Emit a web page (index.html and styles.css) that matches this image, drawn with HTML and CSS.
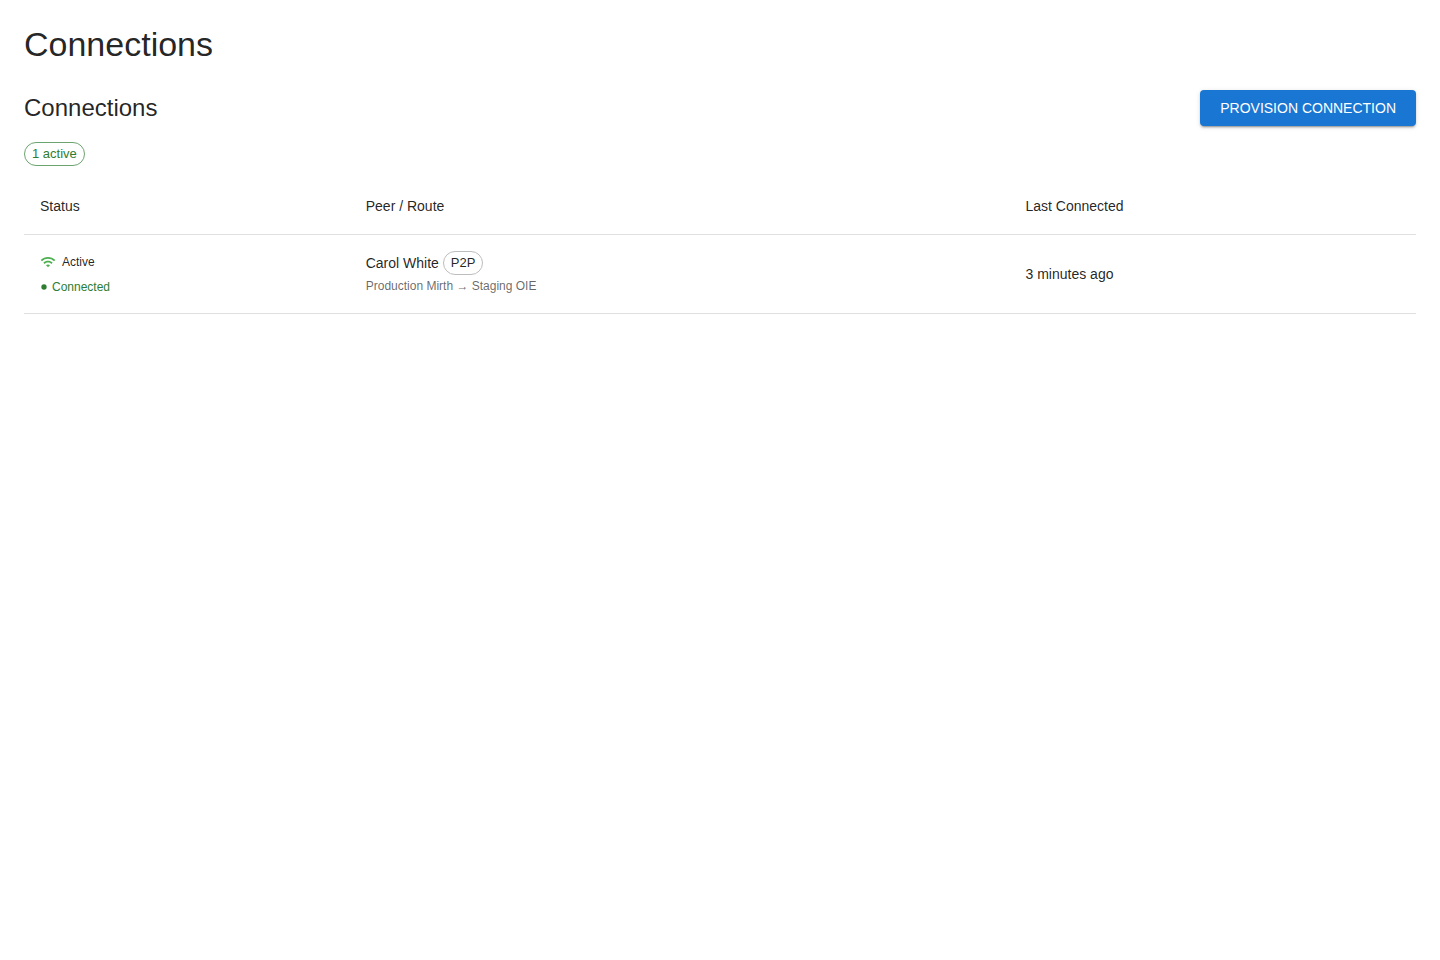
FILE: index.html
```html
<!DOCTYPE html>
<html lang="en">
<head>
    <meta charset="UTF-8">
    <meta name="viewport" content="width=device-width, initial-scale=1.0">
    <title>Connections</title>
    <link rel="stylesheet" href="styles.css">
</head>
<body>
    <main class="page">
        <h1>Connections</h1>
        <section>
            <div class="toolbar">
                <h2>Connections</h2>
                <button type="button" class="btn-primary">Provision Connection</button>
            </div>
            <div class="summary">
                <span class="chip chip-success">1 active</span>
            </div>
            <table class="connections">
                <thead>
                    <tr>
                        <th scope="col" class="col-status">Status</th>
                        <th scope="col" class="col-peer">Peer / Route</th>
                        <th scope="col">Last Connected</th>
                    </tr>
                </thead>
                <tbody>
                    <tr>
                        <td>
                            <div class="status">
                                <svg class="icon-wifi" viewBox="0 0 24 24" aria-hidden="true">
                                    <path d="m1 9 2 2c4.97-4.97 13.03-4.97 18 0l2-2C16.93 2.93 7.08 2.93 1 9zm8 8 3 3 3-3c-1.65-1.66-4.34-1.66-6 0zm-4-4 2 2c2.76-2.76 7.24-2.76 10 0l2-2C15.14 9.14 8.87 9.14 5 13z"/>
                                </svg>
                                <span>Active</span>
                            </div>
                            <div class="status-detail">
                                <svg class="icon-dot" viewBox="0 0 24 24" aria-hidden="true">
                                    <circle cx="12" cy="12" r="8"/>
                                </svg>
                                <span>Connected</span>
                            </div>
                        </td>
                        <td>
                            <div class="peer">
                                <span>Carol White</span>
                                <span class="chip">P2P</span>
                            </div>
                            <div class="route">Production Mirth → Staging OIE</div>
                        </td>
                        <td>3 minutes ago</td>
                    </tr>
                </tbody>
            </table>
        </section>
    </main>
</body>
</html>
```

FILE: styles.css
```css
* {
    box-sizing: border-box;
}
body {
    margin: 0;
    background-color: #fff;
    color: rgba(0, 0, 0, 0.87);
    font-family: "Liberation Sans", Arial, sans-serif;
    font-size: 14px;
    line-height: 20px;
}
.page {
    padding: 24px;
}
h1, h2 {
    margin: 0;
    font-weight: 400;
}
h1 {
    margin-bottom: 26px;
    font-size: 34px;
    line-height: 40px;
}
h2 {
    font-size: 24px;
    line-height: 32px;
}
.toolbar {
    display: flex;
    justify-content: space-between;
    align-items: center;
    margin-bottom: 16px;
}
.btn-primary {
    padding: 6px 20px;
    border: none;
    border-radius: 4px;
    background-color: #1976d2;
    color: #fff;
    font-family: inherit;
    font-size: 14px;
    line-height: 24px;
    text-transform: uppercase;
    cursor: pointer;
    box-shadow: 0 3px 1px -2px rgba(0, 0, 0, 0.2), 0 2px 2px 0 rgba(0, 0, 0, 0.14), 0 1px 5px 0 rgba(0, 0, 0, 0.12);
}
.btn-primary:hover {
    background-color: #1565c0;
}
.summary {
    display: flex;
    gap: 8px;
    margin-bottom: 12px;
}
.chip {
    display: inline-flex;
    align-items: center;
    height: 24px;
    padding: 0 7px;
    border: 1px solid #bdbdbd;
    border-radius: 12px;
    font-size: 13px;
}
.chip-success {
    border-color: rgba(46, 125, 50, 0.7);
    color: #2e7d32;
}
.connections {
    width: 100%;
    border-collapse: separate;
    border-spacing: 0;
}
th, td {
    padding: 16px;
    border-bottom: 1px solid #e0e0e0;
    text-align: left;
    vertical-align: middle;
}
th {
    font-weight: 400;
    line-height: 24px;
}
.col-status {
    width: 23.4%;
}
.col-peer {
    width: 47.4%;
}
.status, .status-detail, .peer {
    display: flex;
    align-items: center;
}
.status {
    gap: 6px;
    margin-bottom: 5px;
    font-size: 12px;
}
.status-detail {
    gap: 4px;
    color: #2e7d32;
    font-size: 12px;
}
.icon-wifi {
    width: 16px;
    height: 16px;
    fill: #4caf50;
}
.icon-dot {
    width: 8px;
    height: 8px;
    fill: #2e7d32;
}
.peer {
    gap: 4px;
}
.route {
    color: rgba(0, 0, 0, 0.6);
    font-size: 12px;
    line-height: 22px;
}
```
